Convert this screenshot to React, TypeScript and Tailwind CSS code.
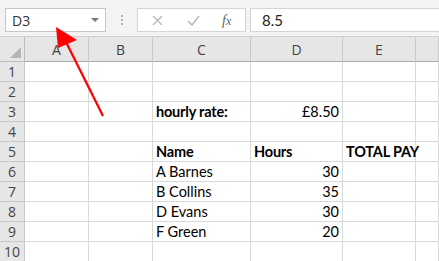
import React from "react";

const cols = ["A", "B", "C", "D", "E", ""];

type Cell = { text: string; bold?: boolean; right?: boolean };

const data: Record<number, Record<number, Cell>> = {
  3: { 2: { text: "hourly rate:", bold: true }, 3: { text: "£8.50", right: true } },
  5: {
    2: { text: "Name", bold: true },
    3: { text: "Hours", bold: true },
    4: { text: "TOTAL PAY", bold: true },
  },
  6: { 2: { text: "A Barnes" }, 3: { text: "30", right: true } },
  7: { 2: { text: "B Collins" }, 3: { text: "35", right: true } },
  8: { 2: { text: "D Evans" }, 3: { text: "30", right: true } },
  9: { 2: { text: "F Green" }, 3: { text: "20", right: true } },
};

const App = () => {
  const rows = [1, 2, 3, 4, 5, 6, 7, 8, 9, 10];

  return (
    <div
      className="relative w-[439px] h-[261px] overflow-hidden bg-white"
      style={{ fontFamily: "Lato, 'Noto Sans', sans-serif" }}
    >
      {/* Formula bar */}
      <div className="flex items-start h-[37px] bg-[#f3f3f3] pt-[8px] pl-[5px] border-b border-[#d0d0d0]">
        <div className="flex items-center justify-between w-[101px] h-[24px] bg-white border border-[#c6c6c6] pl-[6px] pr-[6px] text-[14px] text-[#333]">
          <span style={{ fontFamily: "'Open Sans', sans-serif" }}>D3</span>
          <svg width="8" height="5" viewBox="0 0 8 5">
            <path d="M0 0 L8 0 L4 4 Z" fill="#777" />
          </svg>
        </div>
        <div className="flex flex-col items-center justify-center gap-[2px] w-[31px] h-[24px]">
          <span className="w-[2px] h-[2px] bg-[#b5b5b5]" />
          <span className="w-[2px] h-[2px] bg-[#b5b5b5]" />
          <span className="w-[2px] h-[2px] bg-[#b5b5b5]" />
        </div>
        <div className="flex items-center w-[109px] h-[24px] bg-white border border-[#d4d4d4]">
          <svg className="ml-[14px]" width="11" height="11" viewBox="0 0 11 11">
            <path d="M1 1 L10 10 M10 1 L1 10" stroke="#b8b8b8" strokeWidth="1.4" />
          </svg>
          <svg className="ml-[24px]" width="13" height="11" viewBox="0 0 13 11">
            <path d="M1 6 L5 10 L12 1" stroke="#b8b8b8" strokeWidth="1.6" fill="none" />
          </svg>
          <span
            className="ml-[22px] text-[14px] italic text-[#666]"
            style={{ fontFamily: "'Liberation Serif', serif" }}
          >
            f<span className="text-[12px]">x</span>
          </span>
        </div>
        <div className="flex items-center flex-1 h-[24px] ml-[4px] bg-white border border-[#d4d4d4] border-r-0 pl-[11px] text-[15px] text-[#222]">
          8.5
        </div>
      </div>

      {/* Grid */}
      <div className="grid grid-cols-[25px_64px_64px_98px_92px_73px_1fr] grid-rows-[25px_repeat(10,20px)]">
        <div className="relative bg-[#e6e6e6] border-b border-r border-[#bdbdbd]">
          <svg className="absolute right-[3px] bottom-[3px]" width="11" height="11" viewBox="0 0 11 11">
            <path d="M11 0 L11 11 L0 11 Z" fill="#b4b4b4" />
          </svg>
        </div>
        {cols.map((c, i) => (
          <div
            key={i}
            className="flex items-center justify-center bg-[#e6e6e6] border-b border-r border-b-[#ababab] border-r-[#c9c9c9] text-[14px] text-[#444]"
            style={{ fontFamily: "'Open Sans', sans-serif" }}
          >
            {c}
          </div>
        ))}
        {rows.map((r) => (
          <React.Fragment key={r}>
            <div
              className="flex items-center justify-center bg-[#e6e6e6] border-b border-r border-[#c9c9c9] text-[14px] text-[#444]"
              style={{ fontFamily: "'Open Sans', sans-serif" }}
            >
              {r}
            </div>
            {cols.map((_, ci) => {
              const cell = data[r]?.[ci];
              return (
                <div
                  key={ci}
                  className={`flex items-center border-b border-r border-[#d9d9d9] px-[3px] text-[14.5px] text-black whitespace-nowrap ${
                    cell?.right ? "justify-end" : "justify-start"
                  } ${cell?.bold ? "font-bold tracking-[-0.2px]" : ""}`}
                >
                  {cell?.text}
                </div>
              );
            })}
          </React.Fragment>
        ))}
      </div>

      {/* Red arrow annotation */}
      <svg className="absolute left-0 top-0 pointer-events-none" width="439" height="261">
        <line x1="103" y1="116" x2="66" y2="42" stroke="#ff0000" strokeWidth="2.2" />
        <path d="M56 27 L77 40 L58 48 Z" fill="#ff0000" />
      </svg>
    </div>
  );
};

export default App;
